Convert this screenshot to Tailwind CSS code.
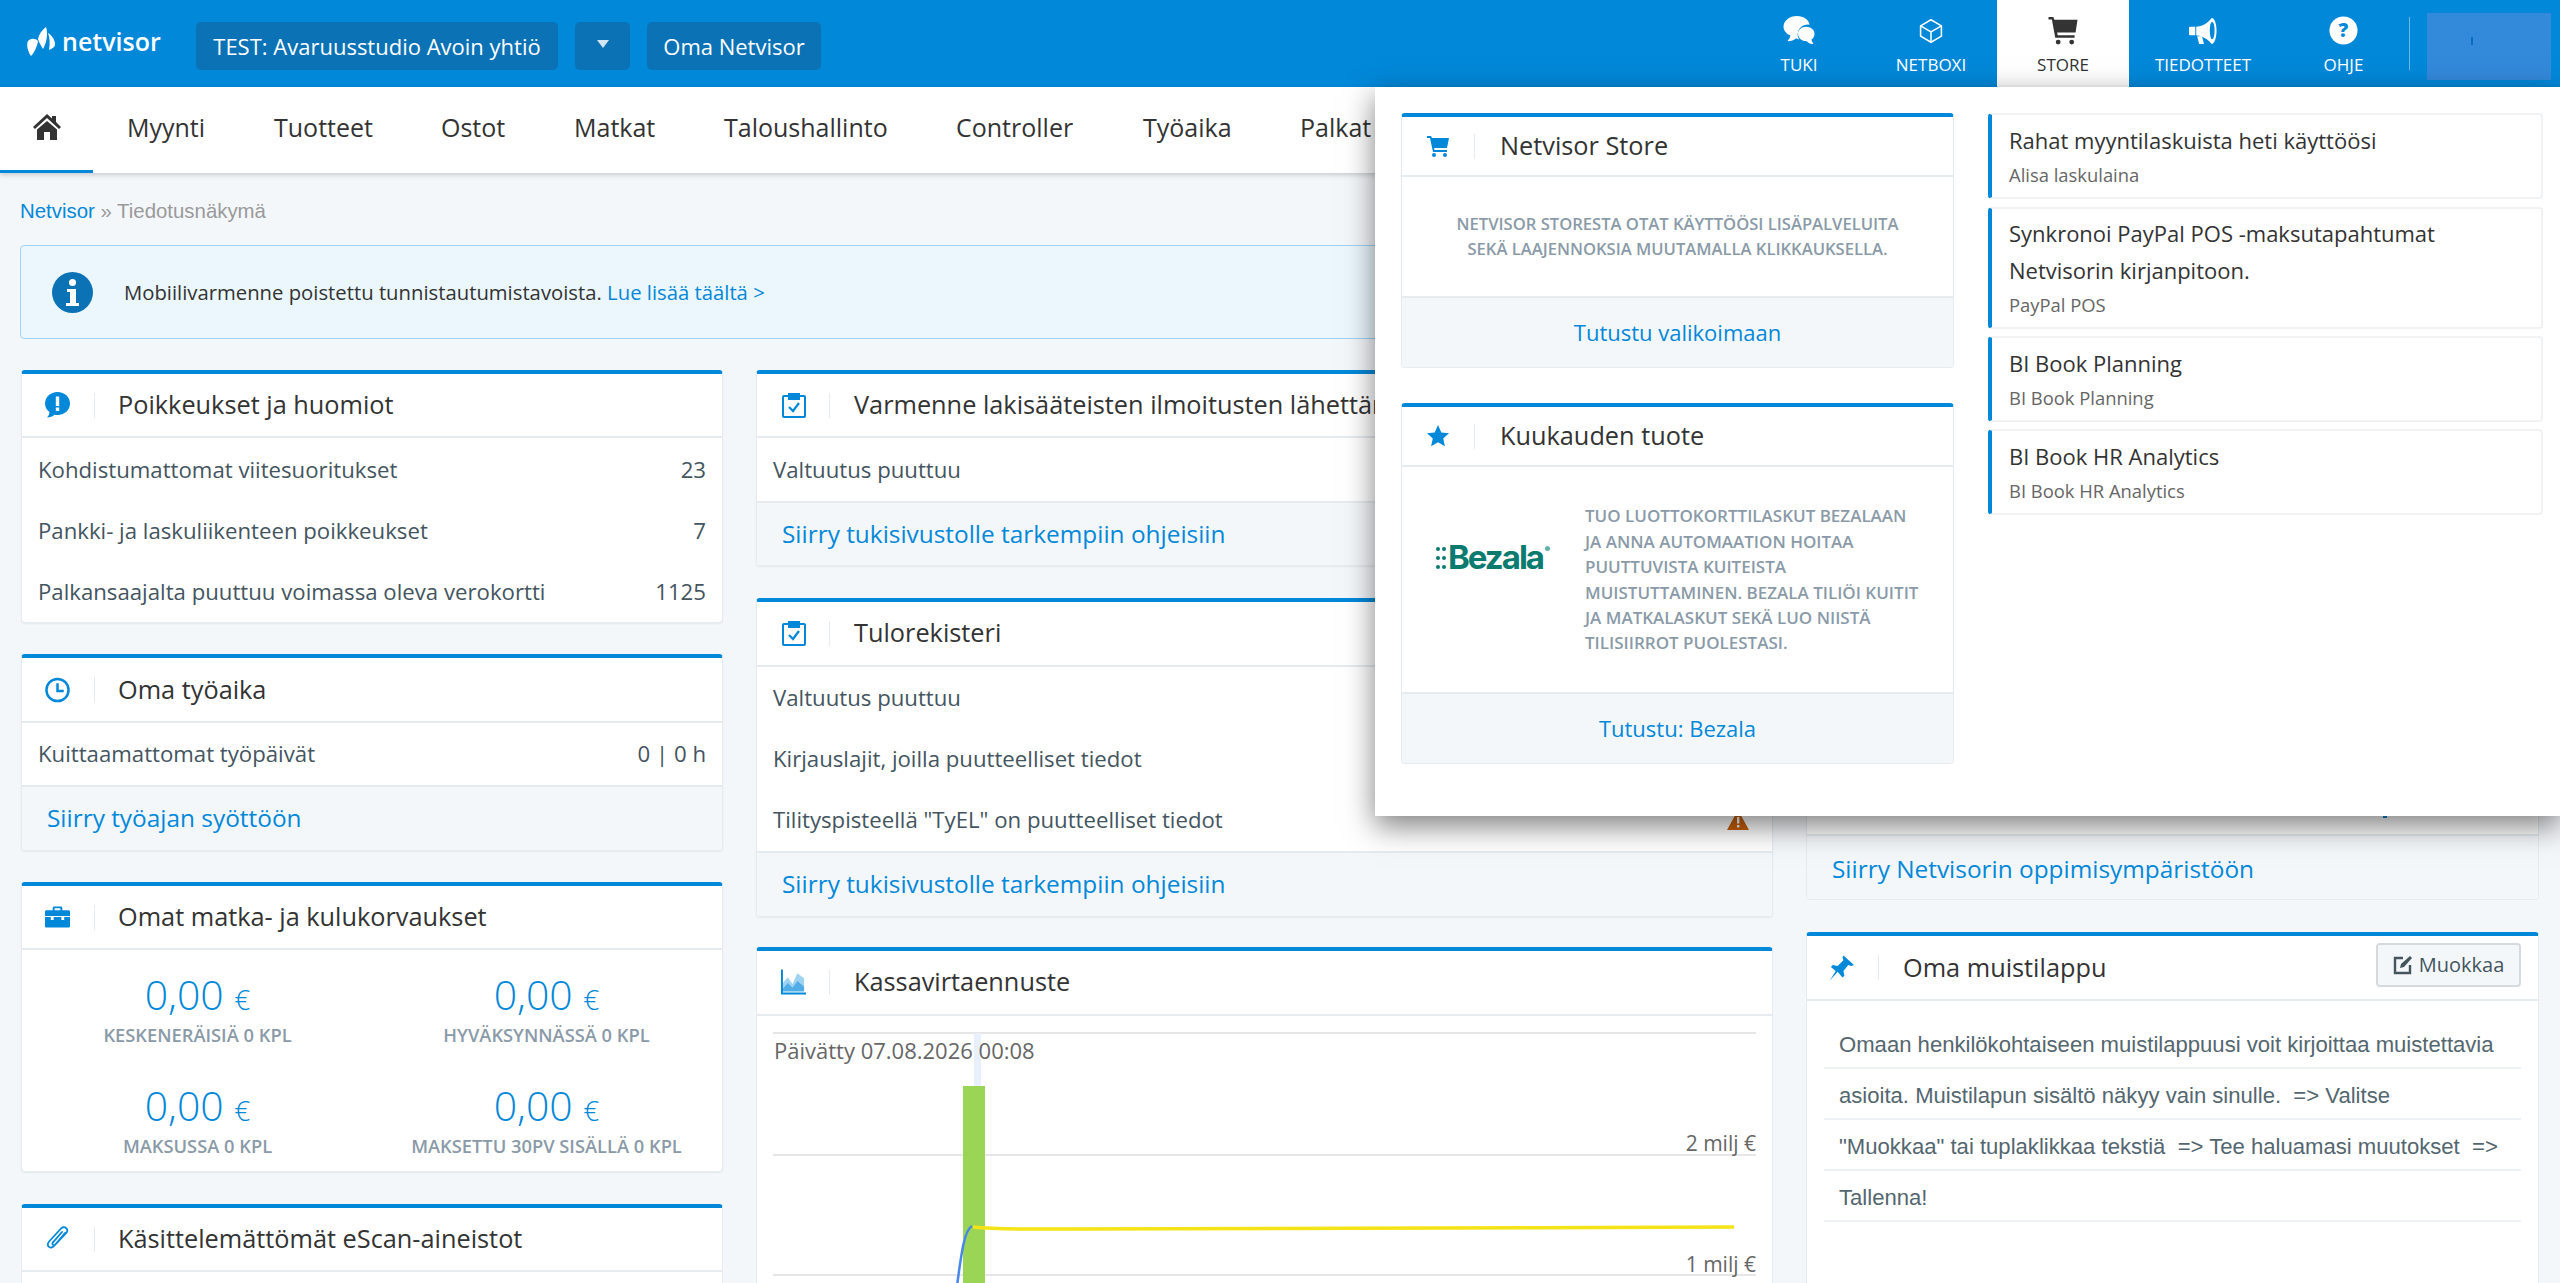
<!DOCTYPE html>
<html lang="fi">
<head>
<meta charset="utf-8">
<title>Netvisor</title>
<script src="https://cdn.jsdelivr.net/npm/@tailwindcss/browser@4"></script>
</head>
<body class="font-['Open_Sans',sans-serif] bg-[#f4f7fa] text-[#333]">
<div class="relative w-[2560px] h-[1283px] overflow-hidden">

  <!-- Top bar -->
  <header class="h-[87px] bg-[#0288d9] flex items-start text-white">
    <div class="flex items-center w-[196px] h-[87px] pl-[27px] gap-[7px] pb-[4px]">
      <svg width="28" height="29" viewBox="0 0 28 29" fill="#fff"><path d="M1 14C4 11 8 11 11 14 10 20 7 26 4 29 1 25-1 18 1 14z"/><path d="M11 12C12 7 15 3 19 0 21 6 20 15 16 22 14 19 12 15 11 12z"/><path d="M21 6C24 8 28 12 28 17 28 20 26 21 22 23 23 17 23 11 21 6z"/></svg>
      <span class="text-[25px] font-semibold leading-none">netvisor</span>
    </div>
    <div class="flex gap-[17px] pt-[22px]">
      <div class="h-[48px] w-[362px] rounded-[5px] bg-[#0b72b5] text-[22px] leading-[48px] text-center">TEST: Avaruusstudio Avoin yhtiö</div>
      <div class="h-[48px] w-[55px] rounded-[5px] bg-[#0b72b5] flex items-center justify-center"><svg width="12" height="8" viewBox="0 0 12 8" fill="#d5e6f3" class="mb-[5px]"><path d="M0 0h12L6 8z"/></svg></div>
      <div class="h-[48px] w-[174px] rounded-[5px] bg-[#0b72b5] text-[22px] leading-[48px] text-center">Oma Netvisor</div>
    </div>
    <div class="ml-auto flex h-[87px] items-start">
      <div class="w-[132px] h-[87px] flex flex-col items-center pt-[16px]">
        <svg width="34" height="29" viewBox="0 0 34 30" fill="#fff"><path d="M15 0c7 0 12 4 13 9-5-1-11 2-12 8-1 3 0 5 1 7-1 0-2 0-3-1-2 2-5 3-9 3 2-2 3-4 3-6C3 18 1 14 1 11 1 5 7 0 15 0z"/><path d="M24 11c5 0 9 3 9 7 0 3-1 5-3 6 0 2 1 3 2 5-3 0-5-1-7-3-5 0-9-3-9-8 0-4 4-7 8-7z"/></svg>
        <span class="text-[17px] leading-[20px] mt-[10px]">TUKI</span>
      </div>
      <div class="w-[132px] h-[87px] flex flex-col items-center pt-[18px]">
        <svg width="28" height="26" viewBox="0 0 28 30" fill="none" stroke="#fff" stroke-width="1.800" stroke-linejoin="round"><path d="M14 2l12 7v12l-12 7-12-7V9z"/><path d="M2 9l12 7 12-7M14 16v12"/></svg>
        <span class="text-[17px] leading-[20px] mt-[11px]">NETBOXI</span>
      </div>
      <div class="w-[132px] h-[87px] bg-white text-[#333] flex flex-col items-center pt-[16px]">
        <svg width="30" height="29" viewBox="0 0 30 30" fill="#333"><path d="M0 1h5l1 3h24l-2 13H9l.5 3H27v2.500H7L3.500 3.500H0z"/><circle cx="10" cy="27" r="2.500"/><circle cx="24" cy="27" r="2.500"/></svg>
        <span class="text-[17px] leading-[20px] mt-[10px]">STORE</span>
      </div>
      <div class="w-[148px] h-[87px] flex flex-col items-center pt-[16px]">
        <svg width="30" height="29" viewBox="0 0 30 30" fill="#fff"><path d="M2 11h5v9H2a1.500 1.500 0 0 1-1.500-1.500v-6A1.500 1.500 0 0 1 2 11z"/><path d="M8 11c6 0 12-4 16-9 3 0 5 6 5 13s-2 14-5 14c-4-5-9-8-16-9z"/><path d="M9 21h5l2 8h-5z"/><ellipse cx="24.500" cy="15" rx="2.500" ry="9" fill="#0288d9"/></svg>
        <span class="text-[17px] leading-[20px] mt-[10px]">TIEDOTTEET</span>
      </div>
      <div class="w-[133px] h-[87px] flex flex-col items-center pt-[16px]">
        <svg width="29" height="29" viewBox="0 0 30 30"><circle cx="15" cy="15" r="14.500" fill="#fff"/><text x="15" y="22" text-anchor="middle" font-size="20" font-weight="800" fill="#0288d9" font-family="Open Sans">?</text></svg>
        <span class="text-[17px] leading-[20px] mt-[10px]">OHJE</span>
      </div>
      <div class="w-px h-[53px] bg-[#6cb9e8] mt-[17px] mr-[17px] ml-[-1px]"></div>
      <div class="relative w-[124px] h-[67px] bg-[#3389da] mt-[13px] mr-[9px]"><div class="absolute left-[44px] top-[24px] w-[2px] h-[8px] bg-[#0b6cc4]"></div></div>
    </div>
  </header>

  <!-- Nav -->
  <nav class="h-[86px] bg-white shadow-[0_2px_5px_rgba(0,0,0,0.18)] flex text-[25px] text-[#333] relative">
    <div class="w-[93px] h-[86px] border-b-[3px] border-[#0288d9] flex items-center justify-center pb-[4px]">
      <svg width="28" height="26" viewBox="0 0 28 26" fill="#333"><path d="M14 0l5 4.500V2h4v6l5 5-2 2L14 4 2 15l-2-2z"/><path d="M4 15.500L14 7l10 8.500V26h-7v-8h-6v8H4z"/></svg>
    </div>
    <div class="flex items-center pb-[4px]">
      <span class="absolute left-[127px]">Myynti</span>
      <span class="absolute left-[274px]">Tuotteet</span>
      <span class="absolute left-[441px]">Ostot</span>
      <span class="absolute left-[574px]">Matkat</span>
      <span class="absolute left-[724px]">Taloushallinto</span>
      <span class="absolute left-[956px]">Controller</span>
      <span class="absolute left-[1143px]">Työaika</span>
      <span class="absolute left-[1300px]">Palkat</span>
    </div>
  </nav>

  <!-- Breadcrumb -->
  <div class="font-['Liberation_Sans',sans-serif] text-[20.400px] leading-[24px] pl-[20px] pt-[26px] text-[#9a9a9a]"><span class="text-[#0288d9]">Netvisor</span> » Tiedotusnäkymä</div>

  <!-- Alert -->
  <div class="mx-[20px] mt-[22px] h-[94px] rounded-[4px] border border-[#9fd3f3] bg-[#ebf6fd] flex items-center pl-[31px]">
    <svg width="41" height="41" viewBox="0 0 41 41"><circle cx="20.500" cy="20.500" r="20.500" fill="#0b72b5"/><circle cx="20.500" cy="10.500" r="3.500" fill="#fff"/><path d="M15 17h9v14h3v3H14v-3h4V20h-3z" fill="#fff"/></svg>
    <p class="ml-[31px] text-[20.300px] text-[#333]">Mobiilivarmenne poistettu tunnistautumistavoista. <span class="text-[#0288d9]">Lue lisää täältä &gt;</span></p>
  </div>

  <!-- Columns -->
  <main class="grid grid-cols-[702px_1017px_733px] gap-x-[33px] pl-[21px] pt-[31px] items-start">

    <!-- Column 1 -->
    <div class="flex flex-col gap-[31px]">
      <section class="bg-white rounded-[4px] border border-[#e6ebf0] border-t-[4px] border-t-[#0288d9] shadow-[0_1px_2px_rgba(0,0,0,0.06)]">
        <div class="h-[64px] border-b-2 border-[#e6ebf0] flex items-center pl-[23px]">
          <span class="w-[25px] flex justify-center"><svg width="25" height="26" viewBox="0 0 25 26"><path d="M12.500 0C19.500 0 25 5 25 11.500S19.500 23 12.500 23c-1 0-2 0-3-.3C7.500 24.500 5 25.500 2 25.500c1.500-1.500 2.500-3.500 2.500-5.500C1.500 18 0 15 0 11.500 0 5 5.500 0 12.500 0z" fill="#0288d9"/><rect x="10.800" y="4.500" width="3.400" height="9.500" fill="#fff"/><rect x="10.800" y="15.500" width="3.400" height="3.400" fill="#fff"/></svg></span>
          <span class="w-px h-[25px] bg-[#e6ebf0] ml-[24px] mr-[23px]"></span>
          <h2 class="text-[25.300px] font-normal">Poikkeukset ja huomiot</h2>
        </div>
        <div class="pt-px text-[22.200px] text-[#44555f] px-[16px]">
          <div class="h-[61px] flex items-center justify-between"><span>Kohdistumattomat viitesuoritukset</span><span>23</span></div>
          <div class="h-[61px] flex items-center justify-between"><span>Pankki- ja laskuliikenteen poikkeukset</span><span>7</span></div>
          <div class="h-[61px] flex items-center justify-between"><span>Palkansaajalta puuttuu voimassa oleva verokortti</span><span>1125</span></div>
        </div>
      </section>

      <section class="bg-white rounded-[4px] border border-[#e6ebf0] border-t-[4px] border-t-[#0288d9] shadow-[0_1px_2px_rgba(0,0,0,0.06)]">
        <div class="h-[65px] border-b-2 border-[#e6ebf0] flex items-center pl-[23px]">
          <span class="w-[25px] flex justify-center"><svg width="26" height="26" viewBox="0 0 26 26" fill="none" stroke="#0288d9" stroke-width="2.600"><circle cx="13" cy="13" r="11.500"/><path d="M13 6v8h6.500"/></svg></span>
          <span class="w-px h-[25px] bg-[#e6ebf0] ml-[24px] mr-[23px]"></span>
          <h2 class="text-[25.300px] font-normal">Oma työaika</h2>
        </div>
        <div class="h-[62px] flex items-center justify-between text-[22.200px] text-[#44555f] px-[16px]"><span>Kuittaamattomat työpäivät</span><span>0 | 0 h</span></div>
        <div class="h-[65px] bg-[#f4f7fa] border-t-2 border-[#e6ebf0] flex items-center pl-[25px] text-[24.400px] text-[#0288d9] rounded-b-[4px]">Siirry työajan syöttöön</div>
      </section>

      <section class="bg-white rounded-[4px] border border-[#e6ebf0] border-t-[4px] border-t-[#0288d9] shadow-[0_1px_2px_rgba(0,0,0,0.06)]">
        <div class="h-[64px] border-b-2 border-[#e6ebf0] flex items-center pl-[23px]">
          <span class="w-[25px] flex justify-center"><svg width="26" height="22" viewBox="0 0 26 22" fill="#0288d9"><path d="M8 4V1.500C8 .7 8.700 0 9.500 0h7c.8 0 1.500.7 1.500 1.500V4h6.500c.8 0 1.500.7 1.500 1.500V10H0V5.500C0 4.700.7 4 1.500 4zm2-2v2h6V2z"/><path d="M0 11h6v3h3v-3h8v3h3v-3h6v9.500c0 .8-.7 1.500-1.500 1.500h-23C.7 22 0 21.300 0 20.500z"/></svg></span>
          <span class="w-px h-[25px] bg-[#e6ebf0] ml-[24px] mr-[23px]"></span>
          <h2 class="text-[25.300px] font-normal">Omat matka- ja kulukorvaukset</h2>
        </div>
        <div class="grid grid-cols-2 px-[1px] pt-[19px] h-[221px] text-center">
          <div class="h-[110px]"><div class="text-[#0288d9] font-light text-[41px] leading-[50px]">0,00 <span class="text-[28px] leading-none">€</span></div><div class="mt-[4px] text-[18.300px] leading-[24px] font-semibold text-[#8a9aa8]">KESKENERÄISIÄ 0 KPL</div></div>
          <div class="h-[110px]"><div class="text-[#0288d9] font-light text-[41px] leading-[50px]">0,00 <span class="text-[28px] leading-none">€</span></div><div class="mt-[4px] text-[18.300px] leading-[24px] font-semibold text-[#8a9aa8]">HYVÄKSYNNÄSSÄ 0 KPL</div></div>
          <div class="h-[90px]"><div class="text-[#0288d9] font-light text-[41px] leading-[50px]">0,00 <span class="text-[28px] leading-none">€</span></div><div class="mt-[4px] text-[18.300px] leading-[24px] font-semibold text-[#8a9aa8]">MAKSUSSA 0 KPL</div></div>
          <div class="h-[90px]"><div class="text-[#0288d9] font-light text-[41px] leading-[50px]">0,00 <span class="text-[28px] leading-none">€</span></div><div class="mt-[4px] text-[18.300px] leading-[24px] font-semibold text-[#8a9aa8]">MAKSETTU 30PV SISÄLLÄ 0 KPL</div></div>
        </div>
      </section>

      <section class="mt-px bg-white rounded-t-[4px] border border-[#e6ebf0] border-t-[4px] border-t-[#0288d9] h-[120px]">
        <div class="h-[64px] border-b-2 border-[#e6ebf0] flex items-center pl-[23px]">
          <span class="w-[25px] flex justify-center"><svg width="24" height="26" viewBox="0 0 24 26" fill="none" stroke="#0288d9" stroke-width="1.800" stroke-linecap="round"><path d="M19 7L8 20c-1.500 1.800-4 2-5.300.7-1.300-1.300-1-3.500.4-5.200L15 2.500c1.200-1.400 3.500-1.800 5-.5 1.500 1.300 1.500 3.400.3 4.800L9.500 18.500c-.7.800-1.800 1-2.500.3-.7-.6-.6-1.700 0-2.500L16 6"/></svg></span>
          <span class="w-px h-[25px] bg-[#e6ebf0] ml-[24px] mr-[23px]"></span>
          <h2 class="text-[25.300px] font-normal">Käsittelemättömät eScan-aineistot</h2>
        </div>
      </section>
    </div>

    <!-- Column 2 -->
    <div class="flex flex-col">
      <section class="bg-white rounded-[4px] border border-[#e6ebf0] border-t-[4px] border-t-[#0288d9] shadow-[0_1px_2px_rgba(0,0,0,0.06)]">
        <div class="h-[64px] border-b-2 border-[#e6ebf0] flex items-center pl-[24px]">
          <span class="w-[25px] flex justify-center"><svg width="24" height="26" viewBox="0 0 24 26" fill="none" stroke="#0288d9" stroke-width="2"><path d="M7 4H2a1 1 0 0 0-1 1v19a1 1 0 0 0 1 1h20a1 1 0 0 0 1-1V5a1 1 0 0 0-1-1h-5"/><rect x="7" y="2" width="10" height="5" fill="#0288d9"/><path d="M7 15l4 4 6-8" stroke-width="2.200"/></svg></span>
          <span class="w-px h-[25px] bg-[#e6ebf0] ml-[23px] mr-[24px]"></span>
          <h2 class="text-[25.300px] font-normal whitespace-nowrap">Varmenne lakisääteisten ilmoitusten lähettämiseen</h2>
        </div>
        <div class="h-[63px] flex items-center text-[22.200px] text-[#44555f] px-[16px]">Valtuutus puuttuu</div>
        <div class="h-[64px] bg-[#f4f7fa] border-t-2 border-[#e6ebf0] flex items-center pl-[25px] text-[24.400px] text-[#0288d9] rounded-b-[4px]">Siirry tukisivustolle tarkempiin ohjeisiin</div>
      </section>

      <section class="mt-[32px] bg-white rounded-[4px] border border-[#e6ebf0] border-t-[4px] border-t-[#0288d9] shadow-[0_1px_2px_rgba(0,0,0,0.06)]">
        <div class="h-[65px] border-b-2 border-[#e6ebf0] flex items-center pl-[24px] pb-[1px]">
          <span class="w-[25px] flex justify-center"><svg width="24" height="26" viewBox="0 0 24 26" fill="none" stroke="#0288d9" stroke-width="2"><path d="M7 4H2a1 1 0 0 0-1 1v19a1 1 0 0 0 1 1h20a1 1 0 0 0 1-1V5a1 1 0 0 0-1-1h-5"/><rect x="7" y="2" width="10" height="5" fill="#0288d9"/><path d="M7 15l4 4 6-8" stroke-width="2.200"/></svg></span>
          <span class="w-px h-[25px] bg-[#e6ebf0] ml-[23px] mr-[24px]"></span>
          <h2 class="text-[25.300px] font-normal">Tulorekisteri</h2>
        </div>
        <div class="pb-px text-[22.200px] text-[#44555f] px-[16px]">
          <div class="h-[61px] flex items-center">Valtuutus puuttuu</div>
          <div class="h-[61px] flex items-center">Kirjauslajit, joilla puutteelliset tiedot</div>
          <div class="h-[61px] flex items-center justify-between"><span>Tilityspisteellä "TyEL" on puutteelliset tiedot</span><svg width="22" height="20" viewBox="0 0 22 20" class="mr-[7px]"><path d="M11 0l11 20H0z" fill="#c8600a"/><rect x="10" y="7" width="2.400" height="6.500" fill="#fff"/><rect x="10" y="15" width="2.400" height="2.400" fill="#fff"/></svg></div>
        </div>
        <div class="h-[65px] bg-[#f4f7fa] border-t-2 border-[#e6ebf0] flex items-center pl-[25px] text-[24.400px] text-[#0288d9] rounded-b-[4px]">Siirry tukisivustolle tarkempiin ohjeisiin</div>
      </section>

      <section class="mt-[30px] bg-white rounded-t-[4px] border border-[#e6ebf0] border-t-[4px] border-t-[#0288d9] h-[340px]">
        <div class="h-[65px] border-b-2 border-[#e6ebf0] flex items-center pl-[24px] pb-[1px]">
          <span class="w-[25px] flex justify-center"><svg width="26" height="26" viewBox="0 0 26 26"><path d="M2 14l5-6 5 7 5-11 7 5v12H2z" fill="#9fd3f3"/><path d="M2 20l5-6 5 5 5-7 7 6v5H2z" fill="#52ace6"/><path d="M1 0v25h25" fill="none" stroke="#0288d9" stroke-width="2"/></svg></span>
          <span class="w-px h-[25px] bg-[#e6ebf0] ml-[23px] mr-[24px]"></span>
          <h2 class="text-[25.300px] font-normal">Kassavirtaennuste</h2>
        </div>
        <!-- free-canvas chart -->
        <div class="relative h-[270px]">
          <div class="absolute left-[16px] right-[16px] top-[16px] h-[2px] bg-[#e6e6e6]"></div>
          <div class="absolute left-[16px] right-[16px] top-[138px] h-[2px] bg-[#e6e6e6]"></div>
          <div class="absolute left-[16px] right-[16px] top-[258px] h-[2px] bg-[#e6e6e6]"></div>
          <div class="absolute left-[217px] top-[17px] w-[7px] h-[53px] bg-[#e8f0fe]"></div>
          <div class="absolute left-[206px] top-[70px] w-[22px] h-[200px] bg-[#9bd555]"></div>
          <div class="absolute left-[17px] top-[21px] text-[22px] leading-[26px] text-[#666] whitespace-nowrap">Päivätty 07.08.2026 00:08</div>
          <div class="absolute right-[16px] top-[114px] text-[21px] leading-[26px] text-[#666]">2 milj €</div>
          <div class="absolute right-[16px] top-[235px] text-[21px] leading-[26px] text-[#666]">1 milj €</div>
          <svg class="absolute left-0 top-0" width="1015" height="270" fill="none"><path d="M200 270C204 240 207 214 215 210" stroke="#4a86e8" stroke-width="2.500"/><path d="M216 211c30 3 60 2 100 2s400-1 661-2" stroke="#f4e316" stroke-width="3.500"/></svg>
        </div>
      </section>
    </div>

    <!-- Column 3 -->
    <div class="flex flex-col">
      <section class="relative h-[530px] flex flex-col bg-white rounded-[4px] border border-[#e6ebf0] border-t-[4px] border-t-[#0288d9]">
        <div class="absolute left-[576px] top-[441px] w-[4px] h-[3px] bg-[#0288d9]"></div>
        <div class="flex-1"></div>
        <div class="h-[65px] pt-[3px] bg-[#f4f7fa] border-t-2 border-[#e6ebf0] flex items-center pl-[25px] text-[24.400px] text-[#0288d9] rounded-b-[4px]">Siirry Netvisorin oppimisympäristöön</div>
      </section>
      <section class="mt-[32px] h-[360px] bg-white rounded-t-[4px] border border-[#e6ebf0] border-t-[4px] border-t-[#0288d9]">
        <div class="h-[65px] border-b-2 border-[#e6ebf0] flex items-center pl-[22px] pr-[17px]">
          <span class="w-[25px] flex justify-center"><svg width="26" height="26" viewBox="0 0 26 26" fill="#0288d9"><path d="M15 0l11 10-3 1-3-1-5 6 1 5-2 2-5-6-8 9 6-10-5-4 2-2 5 1 6-6-1-3z"/></svg></span>
          <span class="w-px h-[25px] bg-[#e6ebf0] ml-[24px] mr-[24px]"></span>
          <h2 class="text-[25.300px] font-normal">Oma muistilappu</h2>
          <div class="ml-auto w-[145px] h-[44px] rounded-[4px] border-2 border-[#d5dade] bg-[#f4f7fa] flex items-center justify-center gap-[6px] text-[20px] text-[#44555f] mb-[6px]"><svg width="20" height="20" viewBox="0 0 20 20" fill="none" stroke="#44555f" stroke-width="2.400"><path d="M10 3H2v15h15v-8"/><path d="M7 13l1-4 9-8 2 2-8 9z" fill="#44555f" stroke="none"/></svg>Muokkaa</div>
        </div>
        <div class="mx-[17px] mt-[17px] font-['Liberation_Sans',sans-serif] text-[22.100px] text-[#54666f]">
          <p class="h-[51px] pt-[3px] leading-[48px] pl-[15px] border-b-2 border-[#eef1f5] whitespace-nowrap">Omaan henkilökohtaiseen muistilappuusi voit kirjoittaa muistettavia</p>
          <p class="h-[51px] pt-[3px] leading-[48px] pl-[15px] border-b-2 border-[#eef1f5] whitespace-pre">asioita. Muistilapun sisältö näkyy vain sinulle.  =&gt; Valitse</p>
          <p class="h-[51px] pt-[3px] leading-[48px] pl-[15px] border-b-2 border-[#eef1f5] whitespace-pre">"Muokkaa" tai tuplaklikkaa tekstiä  =&gt; Tee haluamasi muutokset  =&gt;</p>
          <p class="h-[51px] pt-[3px] leading-[48px] pl-[15px] border-b-2 border-[#eef1f5]">Tallenna!</p>
        </div>
      </section>
    </div>
  </main>

  <!-- Store dropdown -->
  <div class="absolute left-[1375px] top-[87px] w-[1185px] h-[729px] bg-white shadow-[0_10px_28px_rgba(0,0,0,0.5)] flex pl-[26px] pt-[26px] items-start">
    <div class="w-[553px] flex flex-col gap-[35px]">
      <section class="bg-white rounded-[4px] border border-[#e6ebf0] border-t-[4px] border-t-[#0288d9]">
        <div class="h-[60px] border-b-2 border-[#e6ebf0] flex items-center pl-[25px]">
          <span class="w-[22px]"><svg width="22" height="22" viewBox="0 0 22 22" fill="#0288d9"><path d="M0 1h4l1 2h17l-2 10H7l.5 2H20v2H6L3 3H0z"/><circle cx="7" cy="20" r="2"/><circle cx="18" cy="20" r="2"/></svg></span>
          <span class="w-px h-[25px] bg-[#e6ebf0] ml-[25px] mr-[25px]"></span>
          <h2 class="text-[25.300px] font-normal">Netvisor Store</h2>
        </div>
        <div class="h-[119px] pb-px flex flex-col justify-center items-center text-[16.600px] leading-[25.500px] font-semibold text-[#8a9aa8]">
          <div>NETVISOR STORESTA OTAT KÄYTTÖÖSI LISÄPALVELUITA</div>
          <div>SEKÄ LAAJENNOKSIA MUUTAMALLA KLIKKAUKSELLA.</div>
        </div>
        <div class="h-[71px] bg-[#f4f7fa] border-t-2 border-[#e6ebf0] flex items-center justify-center text-[22px] text-[#0288d9] rounded-b-[4px]">Tutustu valikoimaan</div>
      </section>
      <section class="bg-white rounded-[4px] border border-[#e6ebf0] border-t-[4px] border-t-[#0288d9]">
        <div class="h-[60px] border-b-2 border-[#e6ebf0] flex items-center pl-[25px]">
          <span class="w-[22px]"><svg width="22" height="22" viewBox="0 0 22 22" fill="#0288d9"><path d="M11 0l3.300 7.400 7.700.8-5.800 5.200 1.700 7.800L11 17.200 4.100 21.200l1.700-7.800L0 8.200l7.700-.8z"/></svg></span>
          <span class="w-px h-[25px] bg-[#e6ebf0] ml-[25px] mr-[25px]"></span>
          <h2 class="text-[25.300px] font-normal">Kuukauden tuote</h2>
        </div>
        <div class="h-[225px] flex items-center">
          <div class="w-[183px] pl-[34px] pb-[44px] flex items-center gap-[2px] text-[#0b7b6f]">
            <svg width="10" height="26" viewBox="0 0 10 26" fill="#0b7b6f"><circle cx="2" cy="4" r="2"/><circle cx="8" cy="4" r="2"/><circle cx="2" cy="13" r="2"/><circle cx="8" cy="13" r="2"/><circle cx="2" cy="22" r="2"/><circle cx="8" cy="22" r="2"/></svg>
            <span class="font-['Inter',sans-serif] text-[33px] font-bold leading-none tracking-[-2px]">Bezala</span>
            <svg width="5" height="5" viewBox="0 0 5 5" fill="#5fb3a8" class="mb-[18px]"><circle cx="2.500" cy="2.500" r="2.500"/></svg>
          </div>
          <div class="text-[17px] leading-[25.400px] font-semibold text-[#8a9aa8] whitespace-nowrap">TUO LUOTTOKORTTILASKUT BEZALAAN<br>JA ANNA AUTOMAATION HOITAA<br>PUUTTUVISTA KUITEISTA<br>MUISTUTTAMINEN. BEZALA TILIÖI KUITIT<br>JA MATKALASKUT SEKÄ LUO NIISTÄ<br>TILISIIRROT PUOLESTASI.</div>
        </div>
        <div class="h-[71px] bg-[#f4f7fa] border-t-2 border-[#e6ebf0] flex items-center justify-center text-[22px] text-[#0288d9] rounded-b-[4px]">Tutustu: Bezala</div>
      </section>
    </div>
    <div class="ml-[34px] w-[555px] flex flex-col gap-[7px]">
      <div class="h-[86px] rounded-[4px] border-2 border-[#f0f2f4] border-l-[4px] border-l-[#0288d9] pl-[17px] pt-[7px]"><div class="text-[22px] leading-[37px] text-[#333]">Rahat myyntilaskuista heti käyttöösi</div><div class="text-[18.400px] leading-[31px] text-[#666]">Alisa laskulaina</div></div>
      <div class="mt-px h-[122px] rounded-[4px] border-2 border-[#f0f2f4] border-l-[4px] border-l-[#0288d9] pl-[17px] pt-[6px]"><div class="text-[22px] leading-[37px] text-[#333]">Synkronoi PayPal POS -maksutapahtumat<br>Netvisorin kirjanpitoon.</div><div class="text-[18.400px] leading-[31px] text-[#666]">PayPal POS</div></div>
      <div class="h-[86px] rounded-[4px] border-2 border-[#f0f2f4] border-l-[4px] border-l-[#0288d9] pl-[17px] pt-[7px]"><div class="text-[22px] leading-[37px] text-[#333]">BI Book Planning</div><div class="text-[18.400px] leading-[31px] text-[#666]">BI Book Planning</div></div>
      <div class="h-[86px] rounded-[4px] border-2 border-[#f0f2f4] border-l-[4px] border-l-[#0288d9] pl-[17px] pt-[7px]"><div class="text-[22px] leading-[37px] text-[#333]">BI Book HR Analytics</div><div class="text-[18.400px] leading-[31px] text-[#666]">BI Book HR Analytics</div></div>
    </div>
  </div>
</div>
</body>
</html>
